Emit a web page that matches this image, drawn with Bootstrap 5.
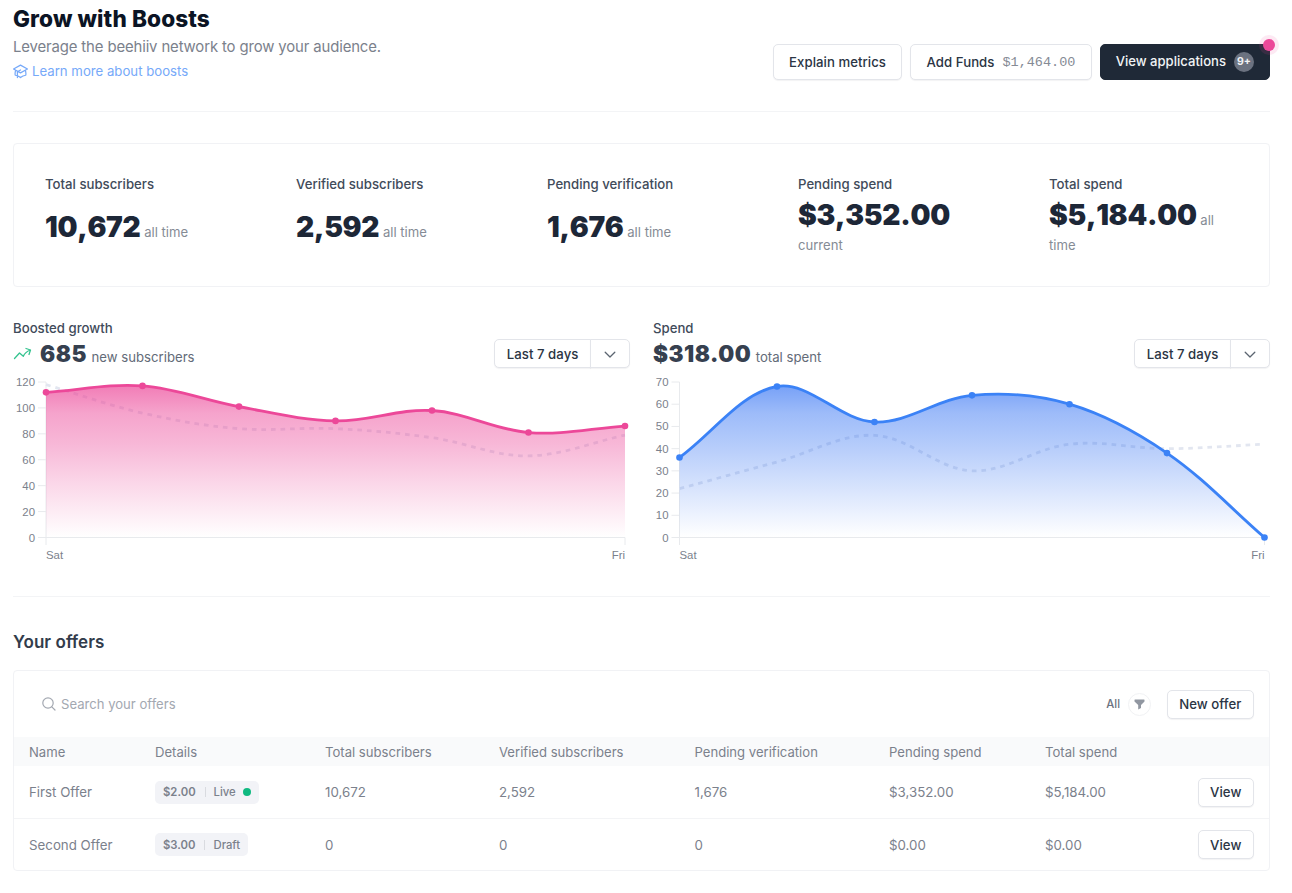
<!DOCTYPE html>
<html lang="en">
<head>
<meta charset="utf-8">
<meta name="viewport" content="width=device-width, initial-scale=1">
<title>Grow with Boosts</title>
<link href="https://cdn.jsdelivr.net/npm/bootstrap@5.3.0/dist/css/bootstrap.min.css" rel="stylesheet">
<style>
  body { font-family: Inter, "Liberation Sans", sans-serif; font-size: 13.1px; line-height: 20px; color: #374151; background: #fff; overflow: hidden; }
  .page { padding: 0 22px 0 13px; }
  .page-head { height: 112px; border-bottom: 1.5px solid #f3f4f6; }
  .page-title { font-size: 22.6px; font-weight: 800; line-height: 38px; color: #0b1424; letter-spacing: .1px; }
  .lede { font-size: 14.9px; line-height: 18px; color: #7b818c; letter-spacing: -.13px; }
  .learn { font-size: 13.2px; line-height: 18px; color: #76a9f9; margin-top: 6px; gap: 4px; }
  .btn-line { --bs-btn-font-size: 13.2px; --bs-btn-font-weight: 500; --bs-btn-line-height: 18px; --bs-btn-color: #2b3544; --bs-btn-bg: #fff; --bs-btn-border-color: #e3e5ea; --bs-btn-border-radius: 5px; --bs-btn-padding-x: 11.6px; --bs-btn-padding-y: 0; height: 29px; letter-spacing: .04px; box-shadow: 0 1px 1px rgba(17,24,39,.05); }
  .head-actions { gap: 8px; padding-top: 44px; }
  .head-actions .btn { height: 36px; --bs-btn-padding-x: 15.3px; }
  .head-actions .btn-ink { --bs-btn-padding-x: 15px; --bs-btn-font-size: 13.1px; --bs-btn-font-weight: 500; --bs-btn-color: #f1f3f5; --bs-btn-bg: #1f2937; --bs-btn-border-color: #1f2937; --bs-btn-border-radius: 5px; --bs-btn-padding-y: 0; }
  .funds { font-family: "Liberation Mono", monospace; font-size: 13.5px; font-weight: 400; letter-spacing: 0; color: #858b95; margin-left: 8px; position: relative; top: 1px; }
  .count { width: 20px; height: 20px; font-size: 10.5px; font-weight: 700; background: #6b7280; margin-left: 8px; }
  .ping { position: absolute; right: -10px; top: -10px; width: 20px; height: 20px; background: rgba(236,72,153,.12); }
  .ping i { width: 12px; height: 12px; background: #ec4899; }
  .panel { border: 1.5px solid #f1f2f5; border-radius: 4px; }
  .stats { margin-top: 31px; height: 144px; }
  .stat { width: 20%; padding: 30px 32px 0 31px; }
  .stat-label { font-size: 13.2px; font-weight: 500; line-height: 20px; color: #414b5a; }
  .stat-value { height: 64px; margin-top: 1.3px; line-height: 24px; color: #858b95; }
  .stat-value b { font-size: 28.2px; font-weight: 900; line-height: 36px; letter-spacing: -.3px; font-kerning: none; color: #1d2737; }
  .charts { gap: 23px; margin-top: 31px; height: 278px; }
  .chart { width: 617px; }
  .chart-head { height: 54px; }
  .chart-head .lbl { font-size: 13.2px; font-weight: 500; line-height: 20px; color: #414b5a; }
  .total { font-size: 13.2px; line-height: 28px; color: #636b78; margin-top: 1.6px; }
  .total b { font-size: 22.5px; font-weight: 900; letter-spacing: .5px; color: #36404f; margin-right: 4.5px; }
  .total svg { position: relative; top: -4px; }
  .range .btn-line + .btn-line { width: 40px; padding: 0; }
  .axis { font: 11.4px "Liberation Sans", sans-serif; fill: #7b818c; }
  .tick { stroke: #e8eaed; stroke-width: 1; fill: none; }
  .offers-section { border-top: 1.5px solid #f3f4f6; }
  .offers-title { font-size: 17px; font-weight: 600; line-height: 24px; color: #323c4b; letter-spacing: .05px; margin: 33px 0 16px; }
  .toolbar { height: 66.4px; padding: 0 15px 0 28px; }
  .search { color: #a3a8b1; gap: 5px; }
  .scope { font-size: 11.3px; color: #6b7280; }
  .filter { width: 23px; height: 23px; border: 1px solid #f1f2f4; margin: 0 15.5px 0 8px; }
  .offers { table-layout: fixed; margin: 0; --bs-table-color: #7b818c; --bs-table-bg: transparent; border-color: #f3f4f6; }
  .offers th, .offers td { padding: 0 15px; height: 52px; vertical-align: middle; font-weight: 400; color: #7b818c; }
  .offers td { font-size: 13.3px; }
  .offers th { height: 29px; background: #f9fafb; border-bottom: 0; }
  .offers tr:last-child td { border-bottom: 0; }
  .pill { height: 23px; padding: 0 8px; border-radius: 5px; background: #f2f3f7; font-size: 11.3px; font-weight: 500; }
  .pill b { font-weight: 600; }
  .pill .sep { width: 1px; height: 10px; background: #d9dbe0; margin: 0 8px 0 9px; }
  .pill .dot { width: 8px; height: 8px; background: #10b981; margin-left: 7.5px; }
</style>
<script src="https://cdn.jsdelivr.net/npm/bootstrap@5.3.0/dist/js/bootstrap.bundle.min.js"></script>
</head>
<body>
<main class="page">
  <header class="page-head d-flex justify-content-between align-items-start">
    <div>
      <h1 class="page-title mb-0">Grow with Boosts</h1>
      <p class="lede mb-0">Leverage the beehiiv network to grow your audience.</p>
      <a class="learn d-flex align-items-center text-decoration-none" href="#">
        <svg width="15" height="15" viewBox="2.300 2.500 19.400 19.400" fill="none" stroke="currentColor" stroke-width="1.600" stroke-linejoin="round" stroke-linecap="round"><path d="M12 14l9-5-9-5-9 5 9 5zm0 0l6.160-3.422a12.083 12.083 0 01.665 6.479A11.952 11.952 0 0012 20.055a11.952 11.952 0 00-6.824-2.998 12.078 12.078 0 01.665-6.479L12 14zm-4 6v-7.500l4-2.222"/></svg>
        <span>Learn more about boosts</span>
      </a>
    </div>
    <div class="head-actions d-flex">
      <button class="btn btn-line">Explain metrics</button>
      <button class="btn btn-line d-flex align-items-center">Add Funds <span class="funds">$1,464.00</span></button>
      <button class="btn btn-ink d-flex align-items-center position-relative">View applications
        <span class="count rounded-circle d-flex align-items-center justify-content-center">9+</span>
        <span class="ping rounded-circle d-flex align-items-center justify-content-center"><i class="rounded-circle"></i></span>
      </button>
    </div>
  </header>

  <section class="stats panel d-flex">
    <div class="stat"><div class="stat-label">Total subscribers</div><div class="stat-value d-flex align-items-center"><div><b>10,672</b> all time</div></div></div>
    <div class="stat"><div class="stat-label">Verified subscribers</div><div class="stat-value d-flex align-items-center"><div><b>2,592</b> all time</div></div></div>
    <div class="stat"><div class="stat-label">Pending verification</div><div class="stat-value d-flex align-items-center"><div><b>1,676</b> all time</div></div></div>
    <div class="stat"><div class="stat-label">Pending spend</div><div class="stat-value d-flex align-items-center"><div><b>$3,352.00</b> current</div></div></div>
    <div class="stat"><div class="stat-label">Total spend</div><div class="stat-value d-flex align-items-center"><div><b>$5,184.00</b> <span>all</span><br><span>time</span></div></div></div>
  </section>

  <section class="charts d-flex">
    <div class="chart">
      <div class="chart-head d-flex justify-content-between">
        <div>
          <div class="lbl">Boosted growth</div>
          <div class="total"><svg class="me-2" width="19" height="14" viewBox="0 0 19 14" fill="none" stroke="#34c38f" stroke-width="1.300" stroke-linecap="round" stroke-linejoin="round"><path d="M1.500 11.500 6.500 6l3.800 3.300C11.500 6.500 14 4.300 17.300 3M13 1.500 17.500 3l-1.500 4.500"/></svg><b>685</b>new subscribers</div>
        </div>
        <div class="range btn-group align-self-end mb-1"><button class="btn btn-line">Last 7 days</button><button class="btn btn-line" aria-label="Choose range"><svg width="12" height="8" viewBox="0 0 12 8" fill="none" stroke="#5b6470" stroke-width="1.300" stroke-linecap="round" stroke-linejoin="round"><path d="m1.200 1.200 4.800 4.800 4.800-4.800"/></svg></button></div>
      </div>
      <svg id="growth" class="d-block" width="620" height="196" viewBox="0 0 620 196"></svg>
    </div>
    <div class="chart">
      <div class="chart-head d-flex justify-content-between">
        <div>
          <div class="lbl">Spend</div>
          <div class="total"><b>$318.00</b>total spent</div>
        </div>
        <div class="range btn-group align-self-end mb-1"><button class="btn btn-line">Last 7 days</button><button class="btn btn-line" aria-label="Choose range"><svg width="12" height="8" viewBox="0 0 12 8" fill="none" stroke="#5b6470" stroke-width="1.300" stroke-linecap="round" stroke-linejoin="round"><path d="m1.200 1.200 4.800 4.800 4.800-4.800"/></svg></button></div>
      </div>
      <svg id="spend" class="d-block" width="620" height="196" viewBox="0 0 620 196"></svg>
    </div>
  </section>

  <section class="offers-section">
    <h2 class="offers-title">Your offers</h2>
    <div class="panel">
      <div class="toolbar d-flex align-items-center">
        <div class="search d-flex align-items-center me-auto"><svg width="14" height="14" viewBox="0 0 14 14" fill="none" stroke="currentColor" stroke-width="1.200" stroke-linecap="round"><circle cx="6" cy="6" r="5.200"/><path d="m9.800 9.800 3.200 3.200"/></svg><span>Search your offers</span></div>
        <span class="scope fw-medium">All</span>
        <span class="filter rounded-circle d-flex align-items-center justify-content-center"><svg width="11" height="11" viewBox="0 0 11 11" fill="#9197a1"><path d="M1 .5h9q.7 0 .5.800v1.200L7 6v3L4.200 10.500V6L.5 2.500V1.200Q.4.500 1 .5"/></svg></span>
        <button class="btn btn-line">New offer</button>
      </div>
      <table class="table offers">
        <colgroup><col style="width:126px"><col style="width:170px"><col style="width:174px"><col style="width:195.500px"><col style="width:194.500px"><col style="width:156px"><col></colgroup>
        <thead><tr><th>Name</th><th>Details</th><th>Total subscribers</th><th>Verified subscribers</th><th>Pending verification</th><th>Pending spend</th><th>Total spend</th></tr></thead>
        <tbody>
          <tr><td>First Offer</td><td><span class="pill d-inline-flex align-items-center"><b>$2.00</b><span class="sep"></span>Live<span class="dot rounded-circle"></span></span></td><td>10,672</td><td>2,592</td><td>1,676</td><td>$3,352.00</td><td><div class="d-flex justify-content-between align-items-center">$5,184.00<button class="btn btn-line">View</button></div></td></tr>
          <tr><td>Second Offer</td><td><span class="pill d-inline-flex align-items-center"><b>$3.00</b><span class="sep"></span>Draft</span></td><td>0</td><td>0</td><td>0</td><td>$0.00</td><td><div class="d-flex justify-content-between align-items-center">$0.00<button class="btn btn-line">View</button></div></td></tr>
        </tbody>
      </table>
    </div>
  </section>
</main>
<script>
  // Smooth line through the points, with control points scaled by neighbour distance.
  function curve(p, t) {
    const c = p.map((q, i) => {
      const a = p[i - 1] || q, b = p[i + 1] || q;
      const d0 = Math.hypot(q[0] - a[0], q[1] - a[1]), d1 = Math.hypot(b[0] - q[0], b[1] - q[1]);
      const f0 = t * d0 / (d0 + d1), f1 = t * d1 / (d0 + d1);
      return [q[0] - f0 * (b[0] - a[0]), q[1] - f0 * (b[1] - a[1]), q[0] + f1 * (b[0] - a[0]), q[1] + f1 * (b[1] - a[1])];
    });
    let d = 'M' + p[0];
    for (let i = 1; i < p.length; i++) d += 'C' + [c[i-1][2], c[i-1][3], c[i][0], c[i][1], p[i][0], p[i][1]];
    return d;
  }
  function draw(id, o) {
    const top = 10, base = 165.5, n = o.now.length - 1;
    const y = v => base - v / o.max * (base - top);
    const pts = a => a.map((v, i) => [o.x0 + i * (o.x1 - o.x0) / n, y(v)]);
    const line = curve(pts(o.now), .35);
    let s = `<defs><linearGradient id="${id}-fill" gradientUnits="userSpaceOnUse" x1="0" y1="${top}" x2="0" y2="${base}">` +
      o.stops.map(k => `<stop offset="${k[0]}" stop-color="${k[1]}" stop-opacity="${k[2]}"/>`).join('') + '</linearGradient></defs>';
    for (let v = 0; v <= o.max; v += o.step)
      s += `<path class="tick" d="M${o.x0 - 8} ${y(v)}H${o.x0}"/><text class="axis" x="${o.x0 - 11}" y="${y(v) + 4}" text-anchor="end">${v}</text>`;
    s += `<path class="tick" d="M${o.x0} ${top}V${base + 7.5}M${o.x0} ${base}H${o.x1}M${o.x1} ${base}v7.5"/>`;
    s += `<path d="${curve(pts(o.prev), .35)}" fill="none" stroke="#e2e6f0" stroke-width="2.800" stroke-dasharray="4.700 4.900"/>`;
    s += `<path d="${line}L${o.x1} ${base}L${o.x0} ${base}Z" fill="url(#${id}-fill)"/>`;
    s += `<path d="${line}" fill="none" stroke="${o.color}" stroke-width="2.800"/>`;
    s += pts(o.now).map(p => `<circle cx="${p[0]}" cy="${p[1]}" r="3.300" fill="${o.color}"/>`).join('');
    s += `<text class="axis" x="${o.x0}" y="187">Sat</text><text class="axis" x="${o.x1}" y="187" text-anchor="end">Fri</text>`;
    document.getElementById(id).innerHTML = s;
  }
  draw('growth', { x0: 33, x1: 612, max: 120, step: 20, color: '#ec4899', now: [112,117,101,90,98,81,86], prev: [118,96,84,84,77,63,79],
    stops: [[0,'#ec4899',.74],[.2,'#ec4899',.5],[.4,'#ec4899',.39],[.65,'#ec4899',.22],[1,'#ec4899',0]] });
  draw('spend', { x0: 26.5, x1: 611.5, max: 70, step: 10, color: '#3b82f6', now: [36,68,52,64,60,38,0], prev: [22,34,46,30,42,40,42],
    stops: [[0,'#2f6ff3',.68],[.2,'#2f6ff3',.47],[.4,'#2f6ff3',.36],[.65,'#2f6ff3',.21],[1,'#2f6ff3',0]] });
</script>
</body>
</html>
